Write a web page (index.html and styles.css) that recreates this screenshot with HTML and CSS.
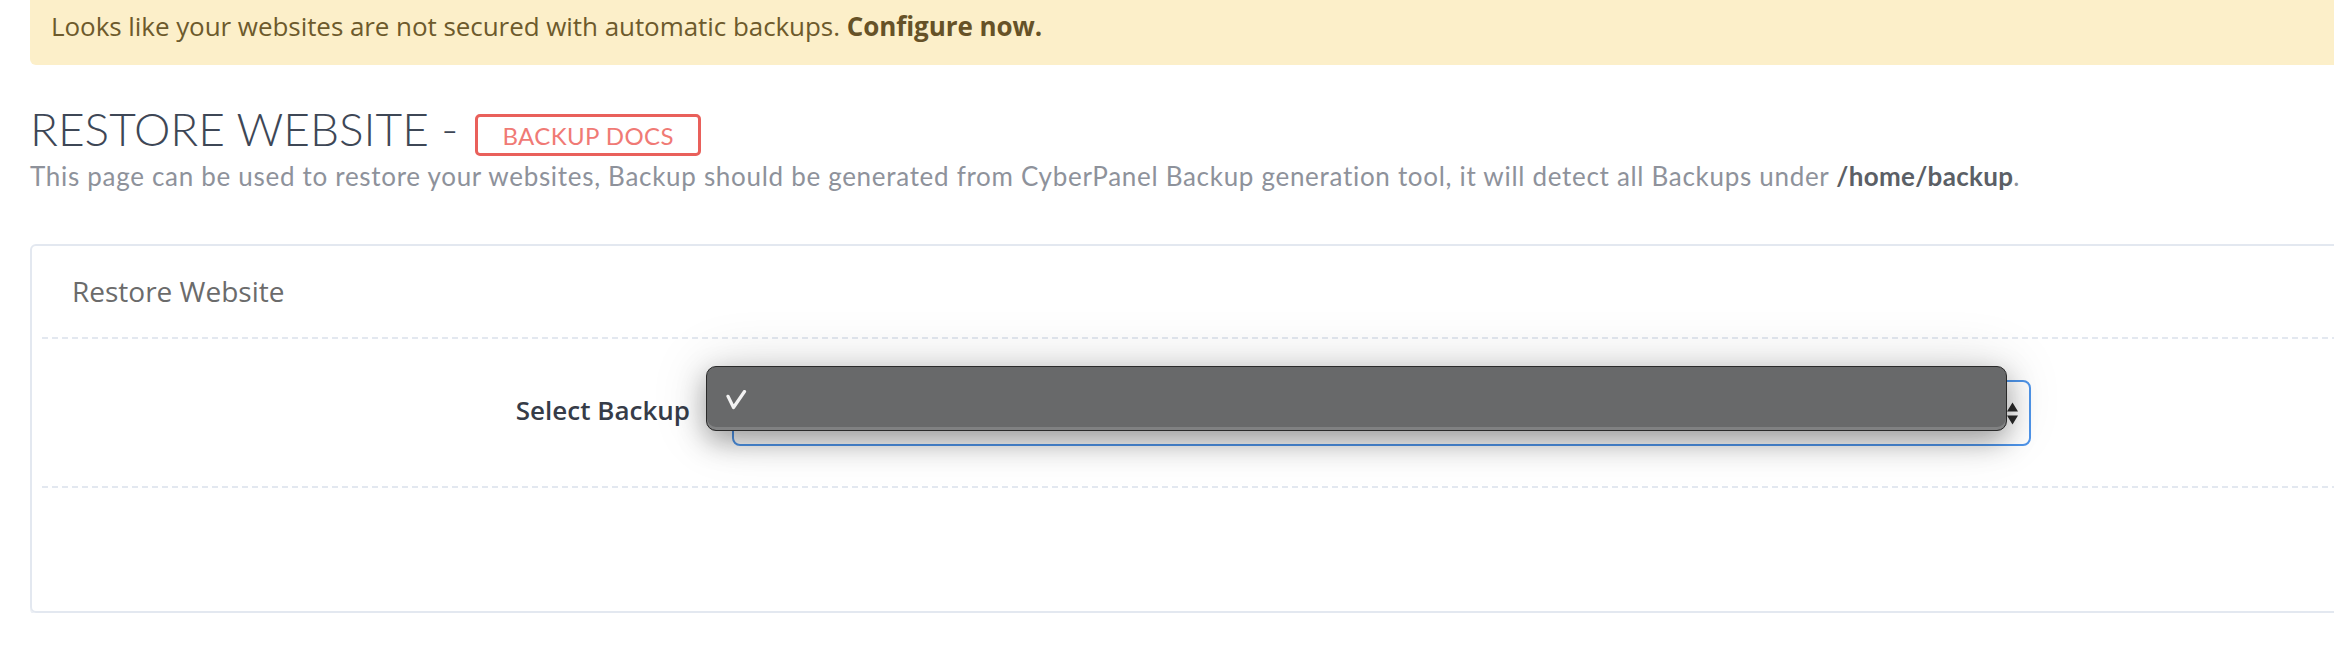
FILE: index.html
```html
<!DOCTYPE html>
<html lang="en">
<head>
<meta charset="utf-8">
<title>Restore Website</title>
<link rel="stylesheet" href="styles.css">
</head>
<body>
<div class="page">
  <div class="alert">Looks like your websites are not secured with automatic backups. <a class="alert-link" href="#">Configure now.</a></div>

  <div class="heading">
    <div class="title-row">
      <h2 class="title">RESTORE WEBSITE -</h2>
      <a class="docs-badge" href="#">BACKUP DOCS</a>
    </div>
    <p class="subtitle">This page can be used to restore your websites, Backup should be generated from CyberPanel Backup generation tool, it will detect all Backups under <strong>/home/backup</strong>.</p>
  </div>

  <div class="card">
    <div class="card-header">Restore Website</div>
    <div class="card-body">
      <div class="form-row">
        <label class="form-label">Select Backup</label>
        <div class="select-wrap">
          <div class="select">
            <svg class="select-arrows" width="11" height="23" viewBox="0 0 11 23"><path d="M0 9.5 L5.5 0.5 L11 9.5 Z M0 13.5 L11 13.5 L5.5 22.5 Z" fill="#2b2b2b"/></svg>
          </div>
          <div class="popup">
            <svg class="check" width="22" height="22" viewBox="0 0 22 22"><polyline points="2,6.3 7.5,17.5 18.5,1.5" fill="none" stroke="#f2f2f2" stroke-width="3.2" stroke-linecap="round" stroke-linejoin="round"/></svg>
          </div>
        </div>
      </div>
    </div>
  </div>
</div>
</body>
</html>
```

FILE: styles.css
```css
html, body {
  margin: 0;
  padding: 0;
  background: #ffffff;
  overflow: hidden;
}

.page {
  width: 2520px;
  padding-left: 30px;
  box-sizing: border-box;
}

.alert {
  height: 65px;
  box-sizing: border-box;
  padding: 8px 0 0 21px;
  background: #fcefc9;
  border-radius: 0 0 0 6px;
  font-family: "Open Sans", sans-serif;
  font-size: 26px;
  letter-spacing: -0.06px;
  color: #6d5a2c;
}

.alert-link {
  font-weight: 700;
  color: #665227;
  text-decoration: none;
}

.heading {
  margin-top: 38px;
}

.title-row {
  display: flex;
  align-items: flex-start;
  gap: 17px;
  height: 53px;
}

.title {
  margin: 0;
  font-family: "Lato", sans-serif;
  font-weight: 300;
  font-size: 46px;
  line-height: 52.8px;
  color: #3e4756;
  letter-spacing: 0;
}

.docs-badge {
  margin-top: 11px;
  height: 42px;
  box-sizing: border-box;
  padding: 0 24px;
  border: 3px solid #e9605b;
  border-radius: 5px;
  display: flex;
  align-items: center;
  font-family: "Lato", sans-serif;
  font-size: 24px;
  color: #f07a75;
  text-decoration: none;
  letter-spacing: 0.4px;
}

.subtitle {
  margin: 2px 0 0;
  font-family: "Lato", sans-serif;
  font-weight: 400;
  font-size: 26px;
  line-height: 36.4px;
  color: #8e929b;
  letter-spacing: 0.7px;
}

.subtitle strong {
  font-weight: 700;
  color: #5b5f66;
  letter-spacing: 0.3px;
}

.card {
  margin-top: 50px;
  height: 369px;
  box-sizing: border-box;
  border: 2px solid #e3e8f0;
  border-radius: 6px;
  box-shadow: 0 2px 0 rgba(220, 226, 236, 0.6);
}

.card-header {
  padding: 27px 40px;
  font-family: "Open Sans", sans-serif;
  font-size: 28px;
  line-height: 37px;
  color: #6b6b6b;
}

.card-body {
  margin: 0 10px;
}

.form-row {
  display: grid;
  grid-template-columns: 648px 1299px;
  column-gap: 42px;
  align-items: center;
  height: 151px;
  box-sizing: border-box;
  border-top: 2px dashed #e3e8f0;
  border-bottom: 2px dashed #e3e8f0;
}

.form-label {
  text-align: right;
  padding-bottom: 5px;
  font-family: "Open Sans", sans-serif;
  font-weight: 600;
  font-size: 26px;
  color: #363c48;
}

.select-wrap {
  position: relative;
  height: 66px;
}

.select {
  height: 66px;
  box-sizing: border-box;
  border: 2px solid #4f95ea;
  border-radius: 8px;
  background: #ffffff;
  display: flex;
  align-items: center;
  justify-content: flex-end;
  padding-right: 11px;
}

.select-arrows {
  display: block;
  margin-top: 1px;
}

.popup {
  position: absolute;
  left: -26px;
  top: -14px;
  width: 1301px;
  height: 65px;
  box-sizing: border-box;
  background: #68696a;
  border: 1.5px solid #2a2a2a;
  border-radius: 10px;
  box-shadow: inset 0 -3px 0 rgba(255, 255, 255, 0.16),
              0 10px 28px rgba(0, 0, 0, 0.34),
              0 0 60px rgba(0, 0, 0, 0.14);
  display: flex;
  align-items: flex-start;
  padding: 23px 0 0 19px;
}

.check {
  display: block;
}
```
